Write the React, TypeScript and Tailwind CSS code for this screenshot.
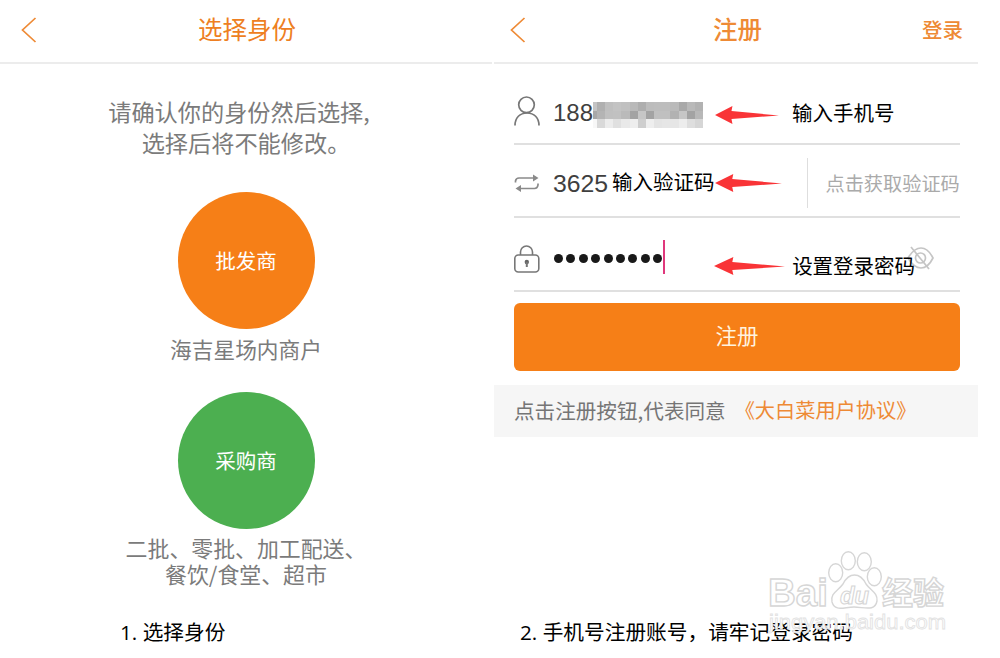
import type { JSX } from "react";

const MOSAIC = [
  ["#c4c4c4", "#b0b0b0", "#bfbfbf", "#c3c3c3", "#c0c0c0", "#b9b9b9", "#aeaeae", "#bcbcbc", "#bdbdbd", "#bdbdbd", "#bababa", "#a9a9a9", "#b9b9b9", "#b2b2b2"],
  ["#a8a8a8", "#b4b4b4", "#c0c0c0", "#c1c1c1", "#bababa", "#a3a3a3", "#c6c6c6", "#a3a3a3", "#c0c0c0", "#c0c0c0", "#b2b2b2", "#c6c6c6", "#a3a3a3", "#b8b8b8"],
  ["#f7f7f7", "#d9d9d9", "#ececec", "#e0e0e0", "#e9e9e9", "#eeeeee", "#cecece", "#eeeeee", "#e4e4e4", "#e6e6e6", "#e6e6e6", "#ededed", "#dedede", "#d6d6d6"],
];

const BackIcon = (): JSX.Element => (
  <svg className="-mt-[2px] h-[26px] w-4" viewBox="0 0 16 26" fill="none" stroke="#ee8a35" strokeWidth="1.7">
    <path d="M14.5 1 1.5 13l13 12" />
  </svg>
);

const Arrow = ({ length }: { length: number }): JSX.Element => (
  <svg className="shrink-0" width={length} height="18" viewBox="0 0 66 18" preserveAspectRatio="none">
    <path d="M0 9 18 0 17 5 66 9.500 17 13 18 18Z" fill="#f93437" />
  </svg>
);

// Left screen: identity picker
const IdentityScreen = (): JSX.Element => (
  <section className="w-[492px] text-center text-[#7b7b7b]">
    <header className="flex h-[64px] items-center border-b-2 border-[#ececec] pl-[21px]">
      <BackIcon />
      <h1 className="-mt-[4px] ml-[161px] text-[24.500px] leading-[30px] text-[#ee7f22]">选择身份</h1>
    </header>
    <p className="mt-[32px] pr-[14px] text-[23.200px] leading-[31px]">
      请确认你的身份然后选择,
      <br />
      <span className="pl-[14px]">选择后将不能修改。</span>
    </p>
    <div className="mx-auto mt-[34px] flex h-[137px] w-[137px] items-center justify-center rounded-full bg-[#f67f17] text-[20.500px] text-white">
      批发商
    </div>
    <p className="mt-[5px] text-[21.700px] leading-[30px]">海吉星场内商户</p>
    <div className="mx-auto mt-[28px] flex h-[137px] w-[137px] items-center justify-center rounded-full bg-[#4caf50] text-[20.500px] text-white">
      采购商
    </div>
    <p className="mt-[6px] text-[21.900px] leading-[26px]">
      二批、零批、加工配送、
      <br />
      餐饮/食堂、超市
    </p>
  </section>
);

// Right screen: sign-up form
const RegisterScreen = (): JSX.Element => (
  <section className="ml-[2px] w-[484px] text-[#3f3f3f]">
    <header className="flex h-[64px] items-center border-b-2 border-[#ececec] pl-[16px] text-[#ee8a35]">
      <BackIcon />
      <h1 className="-mt-[4px] ml-[187px] text-[24.500px] leading-[30px] font-medium">注册</h1>
      <span className="-mt-[4px] ml-[160px] text-[20.500px] leading-[30px] font-medium">登录</span>
    </header>

    <div className="ml-[20px] w-[446px]">
      <div className="flex h-[81px] items-center border-b-2 border-[#e0e0e0] pt-4">
        <svg className="-mt-[2px] h-[30px] w-[26px]" viewBox="0 0 26 30" fill="none" stroke="#777" strokeWidth="1.7">
          <circle cx="12.500" cy="8.800" r="7.800" />
          <path d="M1 29.500C1 21.500 6 17 13 17s12 4.500 12 12.500" />
        </svg>
        <span className="mt-[2px] ml-[13px] w-[40px] font-['Liberation_Sans',sans-serif] text-[24px] leading-[30px]">188</span>
        <div className="mt-[7px] grid w-[110px] grid-cols-[4px_repeat(13,1fr)]">
          {MOSAIC.flat().map((color, i) => (
            <span key={i} className="h-[8.400px]" style={{ backgroundColor: color }} />
          ))}
        </div>
        <div className="mt-[6px] ml-[12px] flex">
          <Arrow length={64} />
        </div>
        <span className="ml-[13px] text-[20.500px] leading-[30px] text-black">输入手机号</span>
      </div>

      <div className="flex h-[73px] items-center border-b-2 border-[#e0e0e0] pt-[5px]">
        <svg className="h-[18px] w-[26px]" viewBox="0 0 26 18" fill="none" stroke="#8a8a8a" strokeWidth="1.700">
          <path d="M1.500 8.500V7Q2 4 5 4H21M24 9.500V11Q23.500 14.500 20.500 14.500H5" />
          <path d="m19 .5 5.500 3.500L19 7.500ZM7 11l-5.500 3.500L7 18Z" fill="#8a8a8a" stroke="none" />
        </svg>
        <span className="mt-[2px] ml-[13px] w-[58px] font-['Liberation_Sans',sans-serif] text-[24.800px] leading-[30px]">3625</span>
        <span className="-mt-[4px] ml-[1px] text-[20.500px] leading-[30px] text-black">输入验证码</span>
        <Arrow length={67} />
        <div className="ml-[25px] flex h-[50px] items-center border-l border-[#dedede] pl-[18px]">
          <span className="text-[19.200px] leading-[30px] whitespace-nowrap text-[#aaa]">点击获取验证码</span>
        </div>
      </div>

      <div className="relative flex h-[74px] items-center border-b-2 border-[#e0e0e0] pt-[9px]">
        <svg className="h-[28px] w-[26px]" viewBox="0 0 26 28" fill="none" stroke="#777" strokeWidth="1.600">
          <rect x=".8" y="10" width="24" height="17" rx="3.500" />
          <path d="M6.500 10V7a6 6 0 0 1 12 0v3" />
          <circle cx="12.800" cy="17" r="2.200" fill="#666" stroke="none" />
          <path d="M12.800 17v5" strokeWidth="2" />
        </svg>
        <div className="ml-[14px] flex gap-[3.400px]">
          {Array.from({ length: 9 }, (_, i) => (
            <span key={i} className="h-[9px] w-[9px] rounded-full bg-[#191919]" />
          ))}
        </div>
        <span className="-mt-[4px] ml-[1px] h-[34px] w-[2px] bg-[#e0387c]" />
        <div className="mt-[14px] ml-[49px] flex">
          <Arrow length={71} />
        </div>
        <svg className="absolute top-[28px] left-[393px] h-[24px] w-[27px]" viewBox="0 0 27 24" fill="none" stroke="#c5c5c5" strokeWidth="1.700">
          <path d="M1 12Q7 2 14 2t12 10q-5 10-12 10T1 12Z" />
          <circle cx="13.500" cy="12" r="5" />
          <path d="m4 1 18 22" />
        </svg>
        <span className="relative mt-[13px] ml-[7px] text-[20.500px] leading-[30px] whitespace-nowrap text-black">设置登录密码</span>
      </div>

      <button className="mt-[11px] h-[68px] w-full rounded-[6px] bg-[#f67f17] pb-[3px] text-[21.500px] text-[#fff3df]">注册</button>
    </div>

    <p className="mt-[14px] flex h-[52px] items-center bg-[#f6f6f6] pb-[2px] pl-[20px] text-[20.600px] whitespace-nowrap text-[#757575]">
      点击注册按钮,代表同意
      <span className="ml-[9px] text-[20.200px] text-[#ee8a35]">《大白菜用户协议》</span>
    </p>
  </section>
);

const Watermark = (): JSX.Element => (
  <svg
    className="absolute top-[545px] left-[765px] font-['Liberation_Sans',sans-serif]"
    width="190"
    height="95"
    viewBox="0 0 190 95"
    fill="white"
    stroke="#d6d6d6"
    strokeWidth="1.400"
  >
    <text x="3" y="61" fontSize="39" fontWeight="700" textLength="60" lengthAdjust="spacingAndGlyphs">Bai</text>
    <ellipse cx="70.700" cy="27.700" rx="7" ry="9" />
    <ellipse cx="83.300" cy="15.700" rx="7" ry="9" />
    <ellipse cx="99.300" cy="16.700" rx="7" ry="9" />
    <ellipse cx="109.300" cy="31.700" rx="7" ry="9" />
    <path d="M78 39c6-12 17-12 23 0 5 7 12 9 11 17-2 11-13 6-23 6s-19 5-22-5c-2-9 6-11 11-18Z" />
    <text x="75" y="59" fontSize="24" fontWeight="700" fontStyle="italic" strokeWidth="1.100" textLength="29" lengthAdjust="spacingAndGlyphs">du</text>
    <text x="117" y="59" fontSize="31" fontWeight="700" textLength="62" className="font-['Noto_Sans_CJK_SC',sans-serif]">经验</text>
    <text x="4" y="84" fontSize="20" strokeWidth=".8" stroke="#e2e2e2" textLength="177" lengthAdjust="spacingAndGlyphs">jingyan.baidu.com</text>
  </svg>
);

const App = (): JSX.Element => (
  <main className="relative h-[658px] w-[1000px] overflow-hidden bg-white font-['Noto_Sans_CJK_SC',sans-serif]">
    <div className="flex h-[615px]">
      <IdentityScreen />
      <RegisterScreen />
    </div>
    <footer className="flex font-['Open_Sans','Noto_Sans_CJK_SC',sans-serif] text-[20.700px] leading-[34px] text-black">
      <p className="w-[400px] pl-[120px]">1. 选择身份</p>
      <p className="pl-[120px]">2. 手机号注册账号，请牢记登录密码</p>
    </footer>
    <Watermark />
  </main>
);

export default App;
